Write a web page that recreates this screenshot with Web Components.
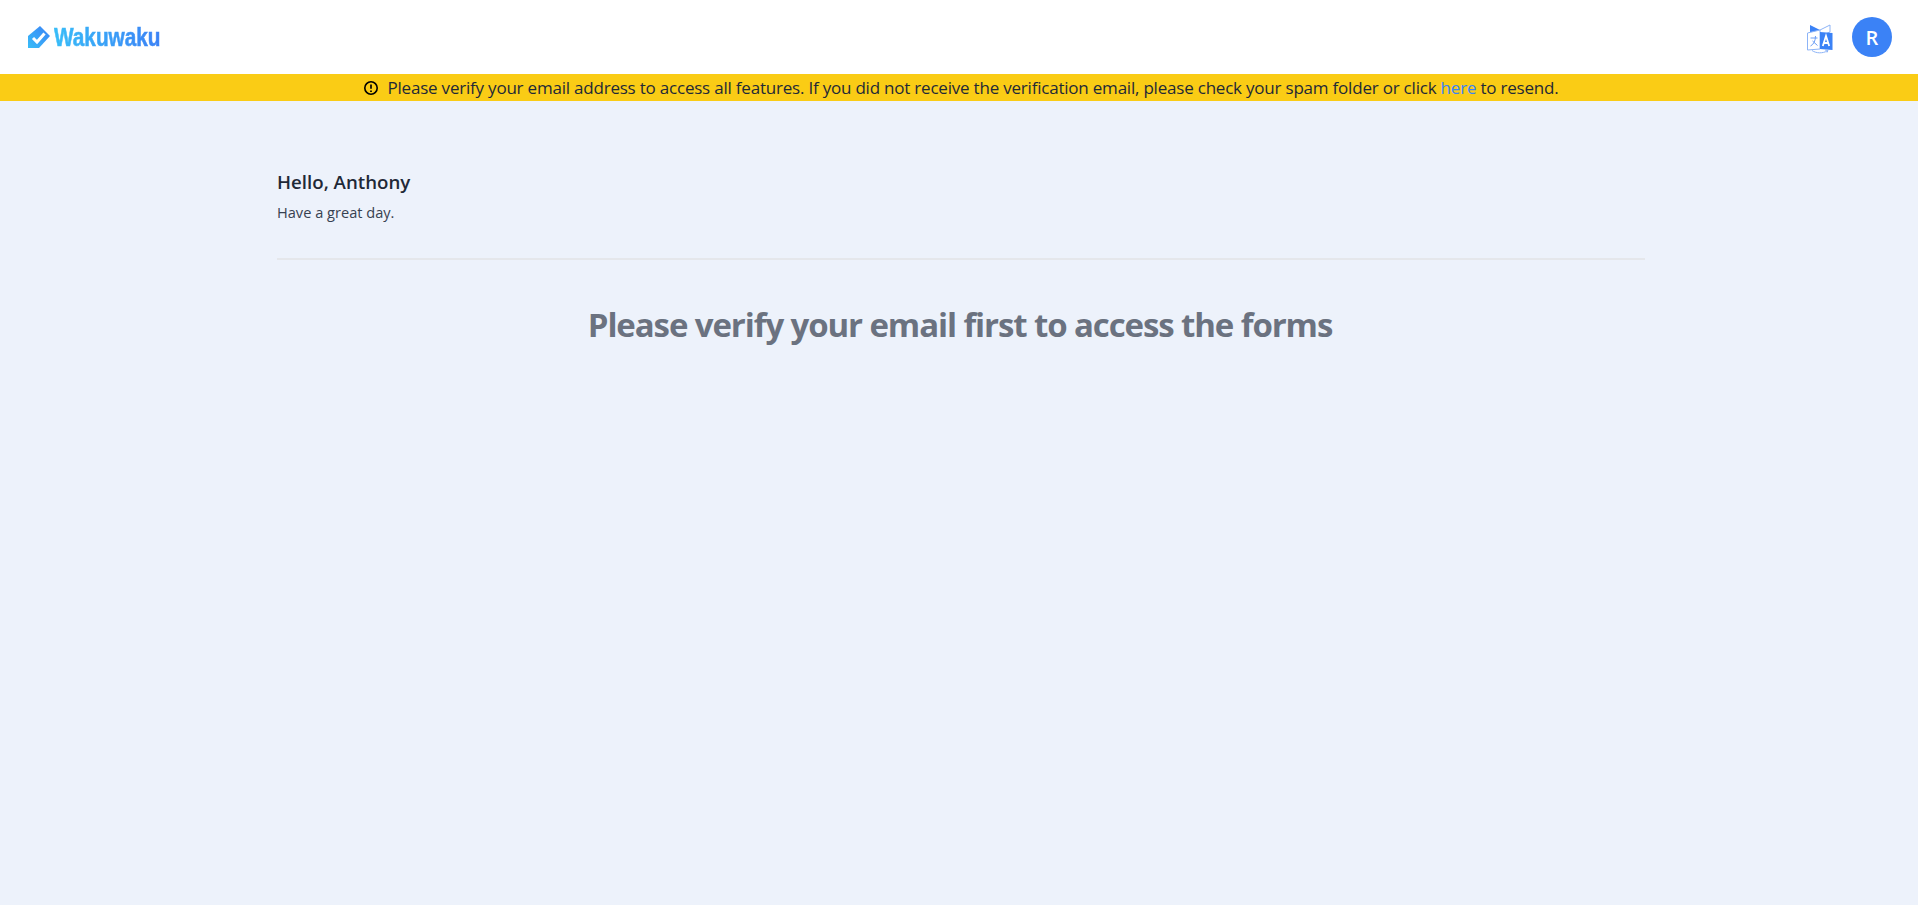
<!DOCTYPE html>
<html lang="en">
<head>
<meta charset="utf-8">
<title>Wakuwaku</title>
<style>
  html, body { margin: 0; height: 100%; }
  body { background: #edf2fb; font-family: "Open Sans", "Noto Sans", sans-serif; }
</style>
</head>
<body>
<app-header></app-header>
<verify-banner>Please verify your email address to access all features. If you did not receive the verification email, please check your spam folder or click <a href="#">here</a> to resend.</verify-banner>
<main-page name="Anthony"></main-page>

<script>
class AppHeader extends HTMLElement {
    constructor() {
        super();
        this.attachShadow({ mode: 'open' });
        this.shadowRoot.innerHTML = `
        <style>
          :host {
            display: flex;
            align-items: center;
            justify-content: space-between;
            height: 74px;
            padding: 0 26px 0 28px;
            background: #fff;
          }
          .logo {
            display: flex;
            align-items: center;
            gap: 4px;
            text-decoration: none;
          }
          .logo svg { display: block; }
          .logo__text {
            display: inline-block;
            font-family: "Liberation Sans", sans-serif;
            font-weight: 700;
            font-size: 25px;
            line-height: 26px;
            -webkit-text-stroke: 0.6px transparent;
            background: linear-gradient(90deg, #38bdf8, #3b82f6);
            -webkit-background-clip: text;
            background-clip: text;
            color: transparent;
            transform: scaleX(0.83);
            transform-origin: left center;
            margin-right: -22px;
          }
          .actions {
            display: flex;
            align-items: center;
            gap: 19px;
          }
          .actions svg { display: block; margin-top: 4px; }
          .avatar {
            width: 40px;
            height: 40px;
            border-radius: 50%;
            background: #3b82f6;
            color: #fff;
            font-weight: 600;
            font-size: 20px;
            display: flex;
            align-items: center;
            justify-content: center;
          }
        </style>
        <a class="logo" href="#">
          <svg width="22" height="22" viewBox="0 0 22 22">
            <defs>
              <linearGradient id="lg" x1="1" y1="0" x2="0" y2="1">
                <stop offset="0" stop-color="#3b82f6"/>
                <stop offset="1" stop-color="#38bdf8"/>
              </linearGradient>
            </defs>
            <path d="M12 0 L22 10 L11 22 L0 22 L0 10 Z" fill="url(#lg)"/>
            <path d="M5 12 L9 16 L16.5 7.5" fill="none" stroke="#fff" stroke-width="3"/>
          </svg>
          <span class="logo__text">Wakuwaku</span>
        </a>
        <div class="actions">
          <svg width="26" height="30" viewBox="0 0 26 30">
            <path d="M3 1 L13 6 L13 12 L3 8 Z" fill="#3b82f6"/>
            <path d="M13 6 L23 1 L23 8 L13 12" fill="#fff" stroke="#8db4f7" stroke-width="1"/>
            <path d="M0.5 9 L13 6 L13 25 L0.5 26 Z" fill="#fff" stroke="#8db4f7" stroke-width="1"/>
            <path d="M13 8 L25.5 9 L25.5 26 L13 25 Z" fill="#3b82f6"/>
            <path d="M15.8 22 L19 12 L22.2 22 M16.8 19 L21.2 19" fill="none" stroke="#fff" stroke-width="1.8"/>
            <path d="M3.5 14 L10.5 14 M8.5 12 C8.5 17 6.5 20.5 3.5 22 M5.5 17 L10.5 21.5" fill="none" stroke="#6a9df5" stroke-width="1"/>
            <path d="M5 26.5 C9 29.5 16 29.5 20 27 M18 26 L21 26.5 L20 28.5" fill="none" stroke="#8db4f7" stroke-width="1"/>
          </svg>
          <div class="avatar">R</div>
        </div>
        `;
    }
}

class VerifyBanner extends HTMLElement {
    constructor() {
        super();
        this.attachShadow({ mode: 'open' });
        this.shadowRoot.innerHTML = `
        <style>
          :host {
            display: flex;
            align-items: center;
            justify-content: center;
            gap: 9px;
            height: 27px;
            padding-left: 3px;
            background: #facc15;
            color: #1f2937;
            font-size: 17px;
            letter-spacing: -0.21px;
          }
          svg { display: block; flex: none; }
          ::slotted(a) { color: #3b82f6; text-decoration: none; }
        </style>
        <svg width="16" height="16" viewBox="0 0 16 16">
          <circle cx="8" cy="8" r="6.2" fill="none" stroke="#000" stroke-width="1.6"/>
          <path d="M8 4.4 V8.8 M8 10.4 V12" stroke="#000" stroke-width="1.7"/>
        </svg>
        <span><slot></slot></span>
        `;
    }
}

class MainPage extends HTMLElement {
    constructor() {
        super();
        this.attachShadow({ mode: 'open' });
        this.shadowRoot.innerHTML = `
        <style>
          :host {
            display: block;
            width: 1368px;
            margin: 0 0 0 277px;
            padding-top: 68px;
          }
          h2 {
            margin: 0;
            font-size: 18.7px;
            line-height: 26px;
            font-weight: 600;
            color: #1f2937;
          }
          p {
            margin: 7px 0 0;
            font-size: 14.6px;
            line-height: 20px;
            color: #374151;
          }
          hr {
            margin: 36px 0 0;
            border: 0;
            height: 2px;
            background: #e5e7eb;
          }
          h1 {
            margin: 45px 0 0;
            padding-right: 2px;
            text-align: center;
            font-size: 33px;
            line-height: 40px;
            font-weight: 700;
            color: #6b7280;
            letter-spacing: -1.1px;
          }
        </style>
        <h2>Hello, <span id="name"></span></h2>
        <p>Have a great day.</p>
        <hr>
        <h1>Please verify your email first to access the forms</h1>
        `;
        this.shadowRoot.getElementById('name').textContent = this.getAttribute('name') || '';
    }
}

customElements.define('app-header', AppHeader);
customElements.define('verify-banner', VerifyBanner);
customElements.define('main-page', MainPage);
</script>
</body>
</html>
